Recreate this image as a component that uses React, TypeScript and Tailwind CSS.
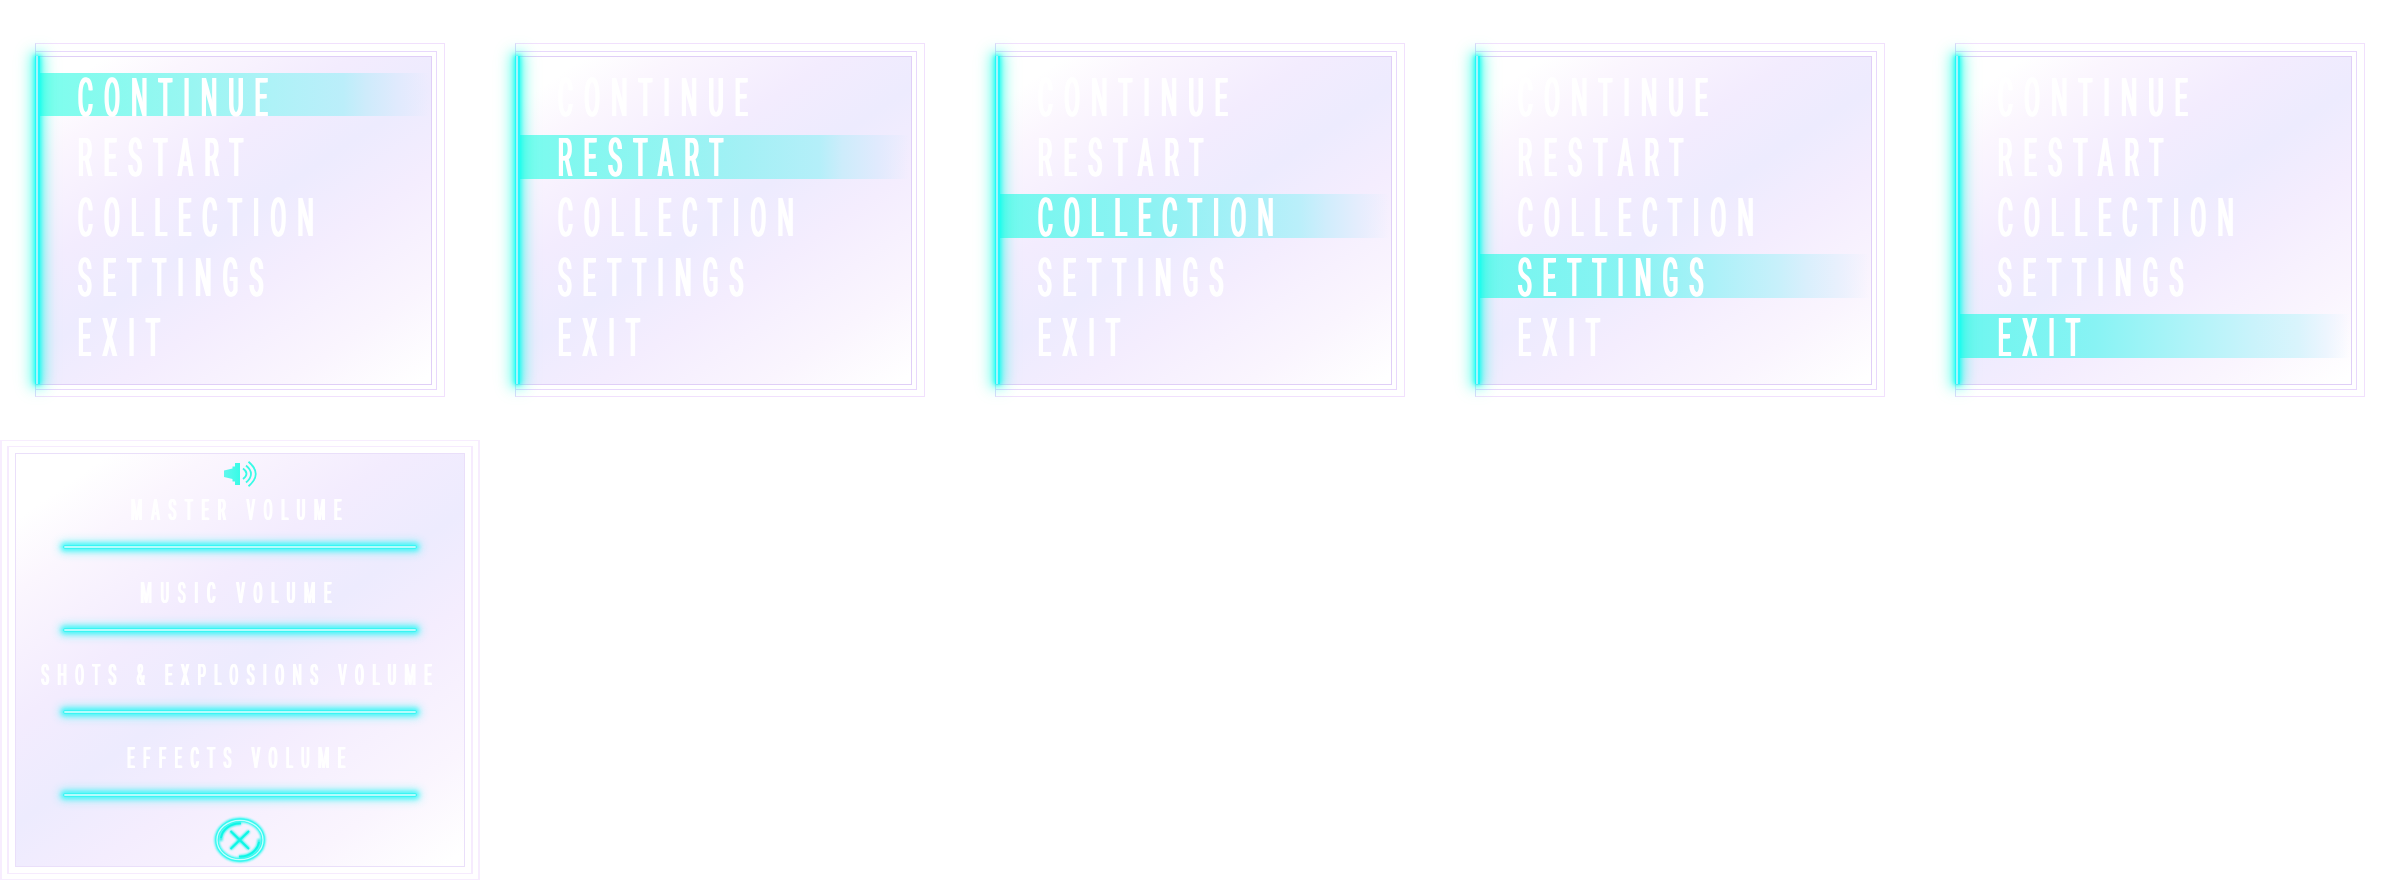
const menuItems = [
  {
    label: "CONTINUE",
    spacing: "tracking-[27.2px]",
    band: "top-[73px] h-[43px] bg-[linear-gradient(to_right,#7dffee_0%,#84fbee_12%,#9af6f2_40%,#aef2f7_60%,#bbeefa_78%,#ceebfb_84%,#e0eafd_92%,#edebfe00_100%)]",
  },
  {
    label: "RESTART",
    spacing: "tracking-[28px]",
    band: "top-[135px] h-[44px] bg-[linear-gradient(to_right,#78fdef_0%,#80f8ef_12%,#94f4f2_40%,#a4f0f5_58%,#b4eff9_77%,#cdecfb_83%,#e0eafd_92%,#efebfe00_100%)]",
  },
  {
    label: "COLLECTION",
    spacing: "tracking-[27px]",
    band: "top-[194px] h-[44px] bg-[linear-gradient(to_right,#70faee_0%,#7cf6f0_12%,#8ff2f3_40%,#a4f0f7_60%,#baeffa_77%,#d0edfc_84%,#e4edfd_92%,#f3edfe00_100%)]",
  },
  {
    label: "SETTINGS",
    spacing: "tracking-[27.2px]",
    band: "top-[254px] h-[44px] bg-[linear-gradient(to_right,#6ef8ef_0%,#7af5f0_12%,#8af3f3_40%,#abf1f8_60%,#c8f0fb_77%,#d9effc_84%,#e8f0fd_92%,#f7f0fe00_100%)]",
  },
  {
    label: "EXIT",
    spacing: "tracking-[27.9px]",
    band: "top-[314px] h-[44px] bg-[linear-gradient(to_right,#6cf7f0_0%,#76f5f0_12%,#88f3f4_35%,#aef3f8_58%,#c9f3fb_75%,#d9f4fc_87%,#ecf5fe_94%,#faf5fe00_100%)]",
  },
];

const volumes = [
  { label: "MASTER VOLUME", spacing: "tracking-[21.5px]" },
  { label: "MUSIC VOLUME", spacing: "tracking-[21.6px]" },
  { label: "SHOTS & EXPLOSIONS VOLUME", spacing: "tracking-[20.8px]" },
  { label: "EFFECTS VOLUME", spacing: "tracking-[20.9px]" },
];

function PauseMenu({ active }: { active: number }) {
  return (
    <section className="relative h-[440px] w-[480px] pt-[43px] pl-[35px]">
      <div className="h-[354px] w-[410px] border border-[#f1e0fd] border-l-[#ddd9fb] pt-[7px]">
        <div className="h-[339px] w-[401px] border border-l-0 border-[#e8d8fc] pt-[4px]">
          <div className="h-[329px] w-[396px] border border-l-0 border-[#e0cff7] bg-[linear-gradient(146deg,#ffffff_0%,#ffffff_8%,#fbf6fe_18%,#f3ecfe_36%,#edebfe_50%,#f4edfe_64%,#faf5fe_83%,#ffffff_98%)] bg-origin-border" />
        </div>
      </div>
      <div className={`absolute left-[38px] w-[391px] ${menuItems[active].band}`} />
      <div className="absolute top-[56px] left-[35px] h-[328px] w-[5px] border-r-2 border-l border-[#22f8fa] bg-[#a4f6fb] shadow-[0_0_4px_1px_#00fff0cc,0_0_12px_3px_#00fff080,0_0_18px_4px_#00ffd044]" />
      <nav className="absolute top-[68px] left-[77.5px] flex flex-col">
        {menuItems.map((item) => (
          <span
            key={item.label}
            className={`h-[60px] origin-left scale-x-[0.42] text-[54px] leading-[60px] font-normal whitespace-nowrap text-white [font-family:Roboto,sans-serif] [text-shadow:2.5px_0_#fff,-2.5px_0_#fff] ${item.spacing}`}
          >
            {item.label}
          </span>
        ))}
      </nav>
    </section>
  );
}

function SpeakerIcon() {
  return (
    <svg className="h-[26px] w-[33px] shrink-0" viewBox="0 0 33 26" fill="none">
      <defs>
        <linearGradient id="speaker" x1="0" x2="1">
          <stop offset="0" stopColor="#5ff8ee" />
          <stop offset="1" stopColor="#38fbe6" />
        </linearGradient>
      </defs>
      <path d="M0 9.500L8.500 7.500V5.500H11V2H16V24H11V20.500H8.500V18L0 16Z" fill="url(#speaker)" />
      <path
        d="M19 7.500Q26 12.500 19 18M22 4.500Q32 12.800 22 21.500M24.500 0.800Q39 13 24.500 25.200"
        stroke="#38fbe6"
        strokeWidth="1.800"
      />
    </svg>
  );
}

function CloseButton() {
  return (
    <button className="-mt-[4px] h-[52px] w-[60px] shrink-0" aria-label="Close">
      <svg className="size-full" viewBox="0 0 60 52" fill="none">
        <defs>
          <filter id="glow" x="-20%" y="-20%" width="140%" height="140%">
            <feGaussianBlur stdDeviation="1.3" />
          </filter>
        </defs>
        <ellipse cx="30" cy="26" rx="23.200" ry="20" stroke="#19fbf0" strokeWidth="4.500" filter="url(#glow)" />
        <g stroke="#14f8ea" strokeWidth="3" filter="url(#glow)">
          <path d="M11 27A19 16.500 0 0 1 31 9.500M49 25A19 16.500 0 0 1 29 42.500" />
          <path d="M20.500 17L39 35M39 17L20.500 35" />
        </g>
        <ellipse cx="30" cy="26" rx="23.200" ry="20" stroke="#35f8ef" strokeWidth="2.800" />
        <ellipse cx="30" cy="26" rx="23" ry="19.700" stroke="#c5fffd" strokeWidth="1.300" />
        <g stroke="#0df7e6" strokeWidth="1.800">
          <path d="M11 24A19 16.500 0 0 1 31 9.500M49 28A19 16.500 0 0 1 29 42.500" />
          <path d="M20.500 17L39 35M39 17L20.500 35" />
        </g>
      </svg>
    </button>
  );
}

function VolumePanel() {
  return (
    <section className="h-[440px] w-[480px] border border-x-2 border-[#f7edfe] px-[5px] pt-[5px]">
      <div className="h-[428px] w-[466px] border border-x-2 border-[#f6ebfe] px-[6px] pt-[6px]">
        <div className="flex h-[414px] w-[450px] flex-col items-center border border-[#eadffa] bg-[linear-gradient(145deg,#ffffff_0%,#ffffff_9%,#fbf6fe_19%,#f3ecfe_37%,#edebfe_51%,#f4edfe_64%,#faf5fe_84%,#ffffff_98%)] pt-[7px]">
          <SpeakerIcon />
          <div className="mt-[1px] flex shrink-0 flex-col items-center">
            {volumes.map((volume) => (
              <div key={volume.label} className="flex h-[82.5px] w-[448px] flex-col items-center">
                <span
                  className={`h-[42px] scale-x-[0.42] pl-[4px] text-[30px] leading-[43px] font-normal whitespace-nowrap text-white [font-family:Roboto,sans-serif] [text-shadow:2px_0_#fff,-2px_0_#fff] ${volume.spacing}`}
                >
                  {volume.label}
                </span>
                <div className="mt-[15px] h-[4px] w-[354px] rounded-full border border-[#3af5f4] bg-[#b5fbfc] shadow-[0_0_4px_2px_#35f8f7cc,0_0_9px_4px_#35f8f770]" />
              </div>
            ))}
          </div>
          <CloseButton />
        </div>
      </div>
    </section>
  );
}

export default function App() {
  return (
    <main className="h-[880px] w-[2400px] overflow-hidden bg-white">
      <div className="flex">
        {menuItems.map((item, index) => (
          <PauseMenu key={item.label} active={index} />
        ))}
      </div>
      <VolumePanel />
    </main>
  );
}
